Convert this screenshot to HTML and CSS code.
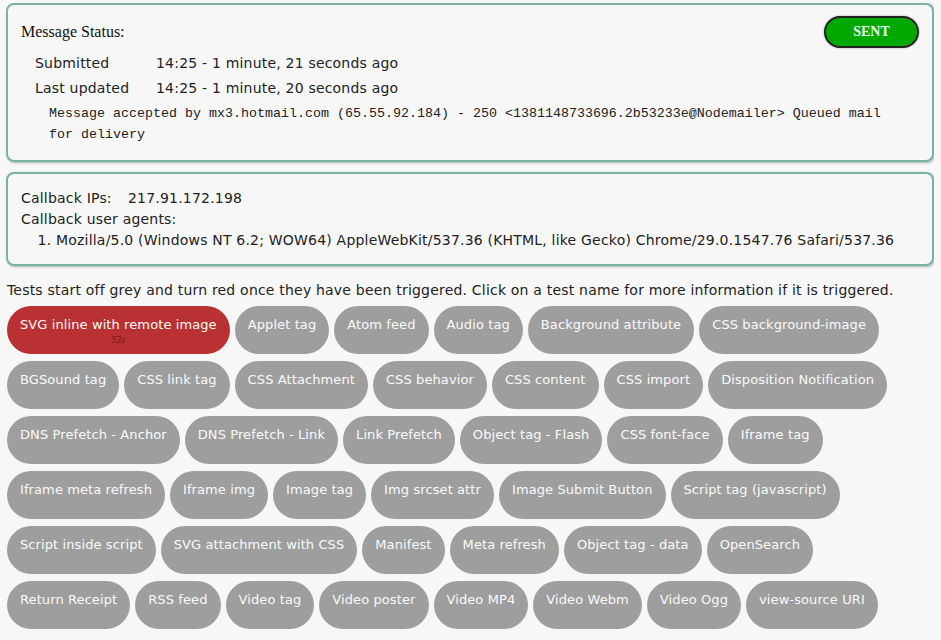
FILE: index.html
```html
<!DOCTYPE html>
<html>
<head>
<meta charset="utf-8">
<title>Message Status</title>
<link rel="stylesheet" href="styles.css">
</head>
<body>
<div class="panel status">
  <div class="status-head">
    <h1 class="status-title">Message Status:</h1>
    <span class="state">SENT</span>
  </div>
  <table class="times">
    <tr><td class="label">Submitted</td><td>14:25 - 1 minute, 21 seconds ago</td></tr>
    <tr><td class="label">Last updated</td><td>14:25 - 1 minute, 20 seconds ago</td></tr>
  </table>
  <div class="smtp">Message accepted by mx3.hotmail.com (65.55.92.184) - 250 &lt;1381148733696.2b53233e@Nodemailer&gt; Queued mail for delivery</div>
</div>

<div class="panel callbacks">
  <div class="cb-line"><span class="cb-label">Callback IPs:</span>217.91.172.198</div>
  <div class="cb-line">Callback user agents:</div>
  <ol class="agents">
    <li>Mozilla/5.0 (Windows NT 6.2; WOW64) AppleWebKit/537.36 (KHTML, like Gecko) Chrome/29.0.1547.76 Safari/537.36</li>
  </ol>
</div>

<p class="hint">Tests start off grey and turn red once they have been triggered. Click on a test name for more information if it is triggered.</p>

<div class="tests">
  <a class="test hit">SVG inline with remote image<span class="ago">53s</span></a>
  <a class="test">Applet tag</a>
  <a class="test">Atom feed</a>
  <a class="test">Audio tag</a>
  <a class="test">Background attribute</a>
  <a class="test">CSS background-image</a>
  <a class="test">BGSound tag</a>
  <a class="test">CSS link tag</a>
  <a class="test">CSS Attachment</a>
  <a class="test">CSS behavior</a>
  <a class="test">CSS content</a>
  <a class="test">CSS import</a>
  <a class="test">Disposition Notification</a>
  <a class="test">DNS Prefetch - Anchor</a>
  <a class="test">DNS Prefetch - Link</a>
  <a class="test">Link Prefetch</a>
  <a class="test">Object tag - Flash</a>
  <a class="test">CSS font-face</a>
  <a class="test">Iframe tag</a>
  <a class="test">Iframe meta refresh</a>
  <a class="test">Iframe img</a>
  <a class="test">Image tag</a>
  <a class="test">Img srcset attr</a>
  <a class="test">Image Submit Button</a>
  <a class="test">Script tag (javascript)</a>
  <a class="test">Script inside script</a>
  <a class="test">SVG attachment with CSS</a>
  <a class="test">Manifest</a>
  <a class="test">Meta refresh</a>
  <a class="test">Object tag - data</a>
  <a class="test">OpenSearch</a>
  <a class="test">Return Receipt</a>
  <a class="test">RSS feed</a>
  <a class="test">Video tag</a>
  <a class="test">Video poster</a>
  <a class="test">Video MP4</a>
  <a class="test">Video Webm</a>
  <a class="test">Video Ogg</a>
  <a class="test">view-source URI</a>
</div>
</body>
</html>
```

FILE: styles.css
```css
html, body {
  background: #f7f7f7;
}

body {
  margin: 3px 7px 0 6px;
  font-family: "DejaVu Sans", Verdana, sans-serif;
  font-size: 14px;
  letter-spacing: 0.2px;
  color: #222;
}

/* rounded teal-bordered panels */
.panel {
  background: #f7f7f7;
  border: 2px solid #7ab3a1;
  border-radius: 8px;
  box-shadow: 1px 1px 3px rgba(0, 0, 0, 0.28);
}

.status {
  padding: 11px 13px 15px 13px;
}

.status-head {
  display: flex;
  justify-content: space-between;
  align-items: center;
  height: 32px;
}

.status-title {
  margin: 0;
  font-family: "Liberation Serif", "Times New Roman", serif;
  font-size: 16px;
  font-weight: normal;
  letter-spacing: 0;
  color: #111;
}

.state {
  box-sizing: border-box;
  width: 95px;
  height: 32px;
  line-height: 28px;
  text-align: center;
  background: #00a800;
  border: 2px solid #222;
  border-radius: 16px;
  box-shadow: 0 0 2px rgba(0, 0, 0, 0.4);
  color: #f0fff0;
  font-family: "Liberation Serif", "Times New Roman", serif;
  font-weight: bold;
  font-size: 14px;
  letter-spacing: 0;
}

.times {
  border-collapse: collapse;
  margin: 2px 0 0 14px;
}

.times td {
  padding: 0;
  height: 25px;
  vertical-align: middle;
}

.times .label {
  width: 121px;
}

.smtp {
  margin: 3px 20px 0 28px;
  font-family: "Liberation Mono", "Courier New", monospace;
  font-size: 13.33px;
  line-height: 21px;
  letter-spacing: 0;
  color: #222;
}

.callbacks {
  margin-top: 10px;
  padding: 14px 13px 13px 13px;
  line-height: 21px;
}

.cb-label {
  display: inline-block;
  width: 107px;
}

.agents {
  margin: 0;
  padding-left: 35px;
}

.hint {
  margin: 14px 0 0 1px;
  line-height: 21px;
}

/* test pills */
.tests {
  display: flex;
  flex-wrap: wrap;
  gap: 7px 5px;
  margin: 5px 0 0 1px;
}

.test {
  box-sizing: border-box;
  display: flex;
  flex-direction: column;
  align-items: center;
  height: 48px;
  padding: 11px 13px 0;
  border-radius: 24px;
  background: #9e9e9e;
  color: #fafafa;
  font-size: 13px;
  line-height: 16px;
  letter-spacing: 0.1px;
  white-space: nowrap;
  cursor: pointer;
}

.test.hit {
  background: #b93132;
}

.ago {
  margin-top: 3px;
  font-size: 8px;
  line-height: 10px;
  font-style: italic;
  letter-spacing: 0;
  color: #7a1515;
}
```
